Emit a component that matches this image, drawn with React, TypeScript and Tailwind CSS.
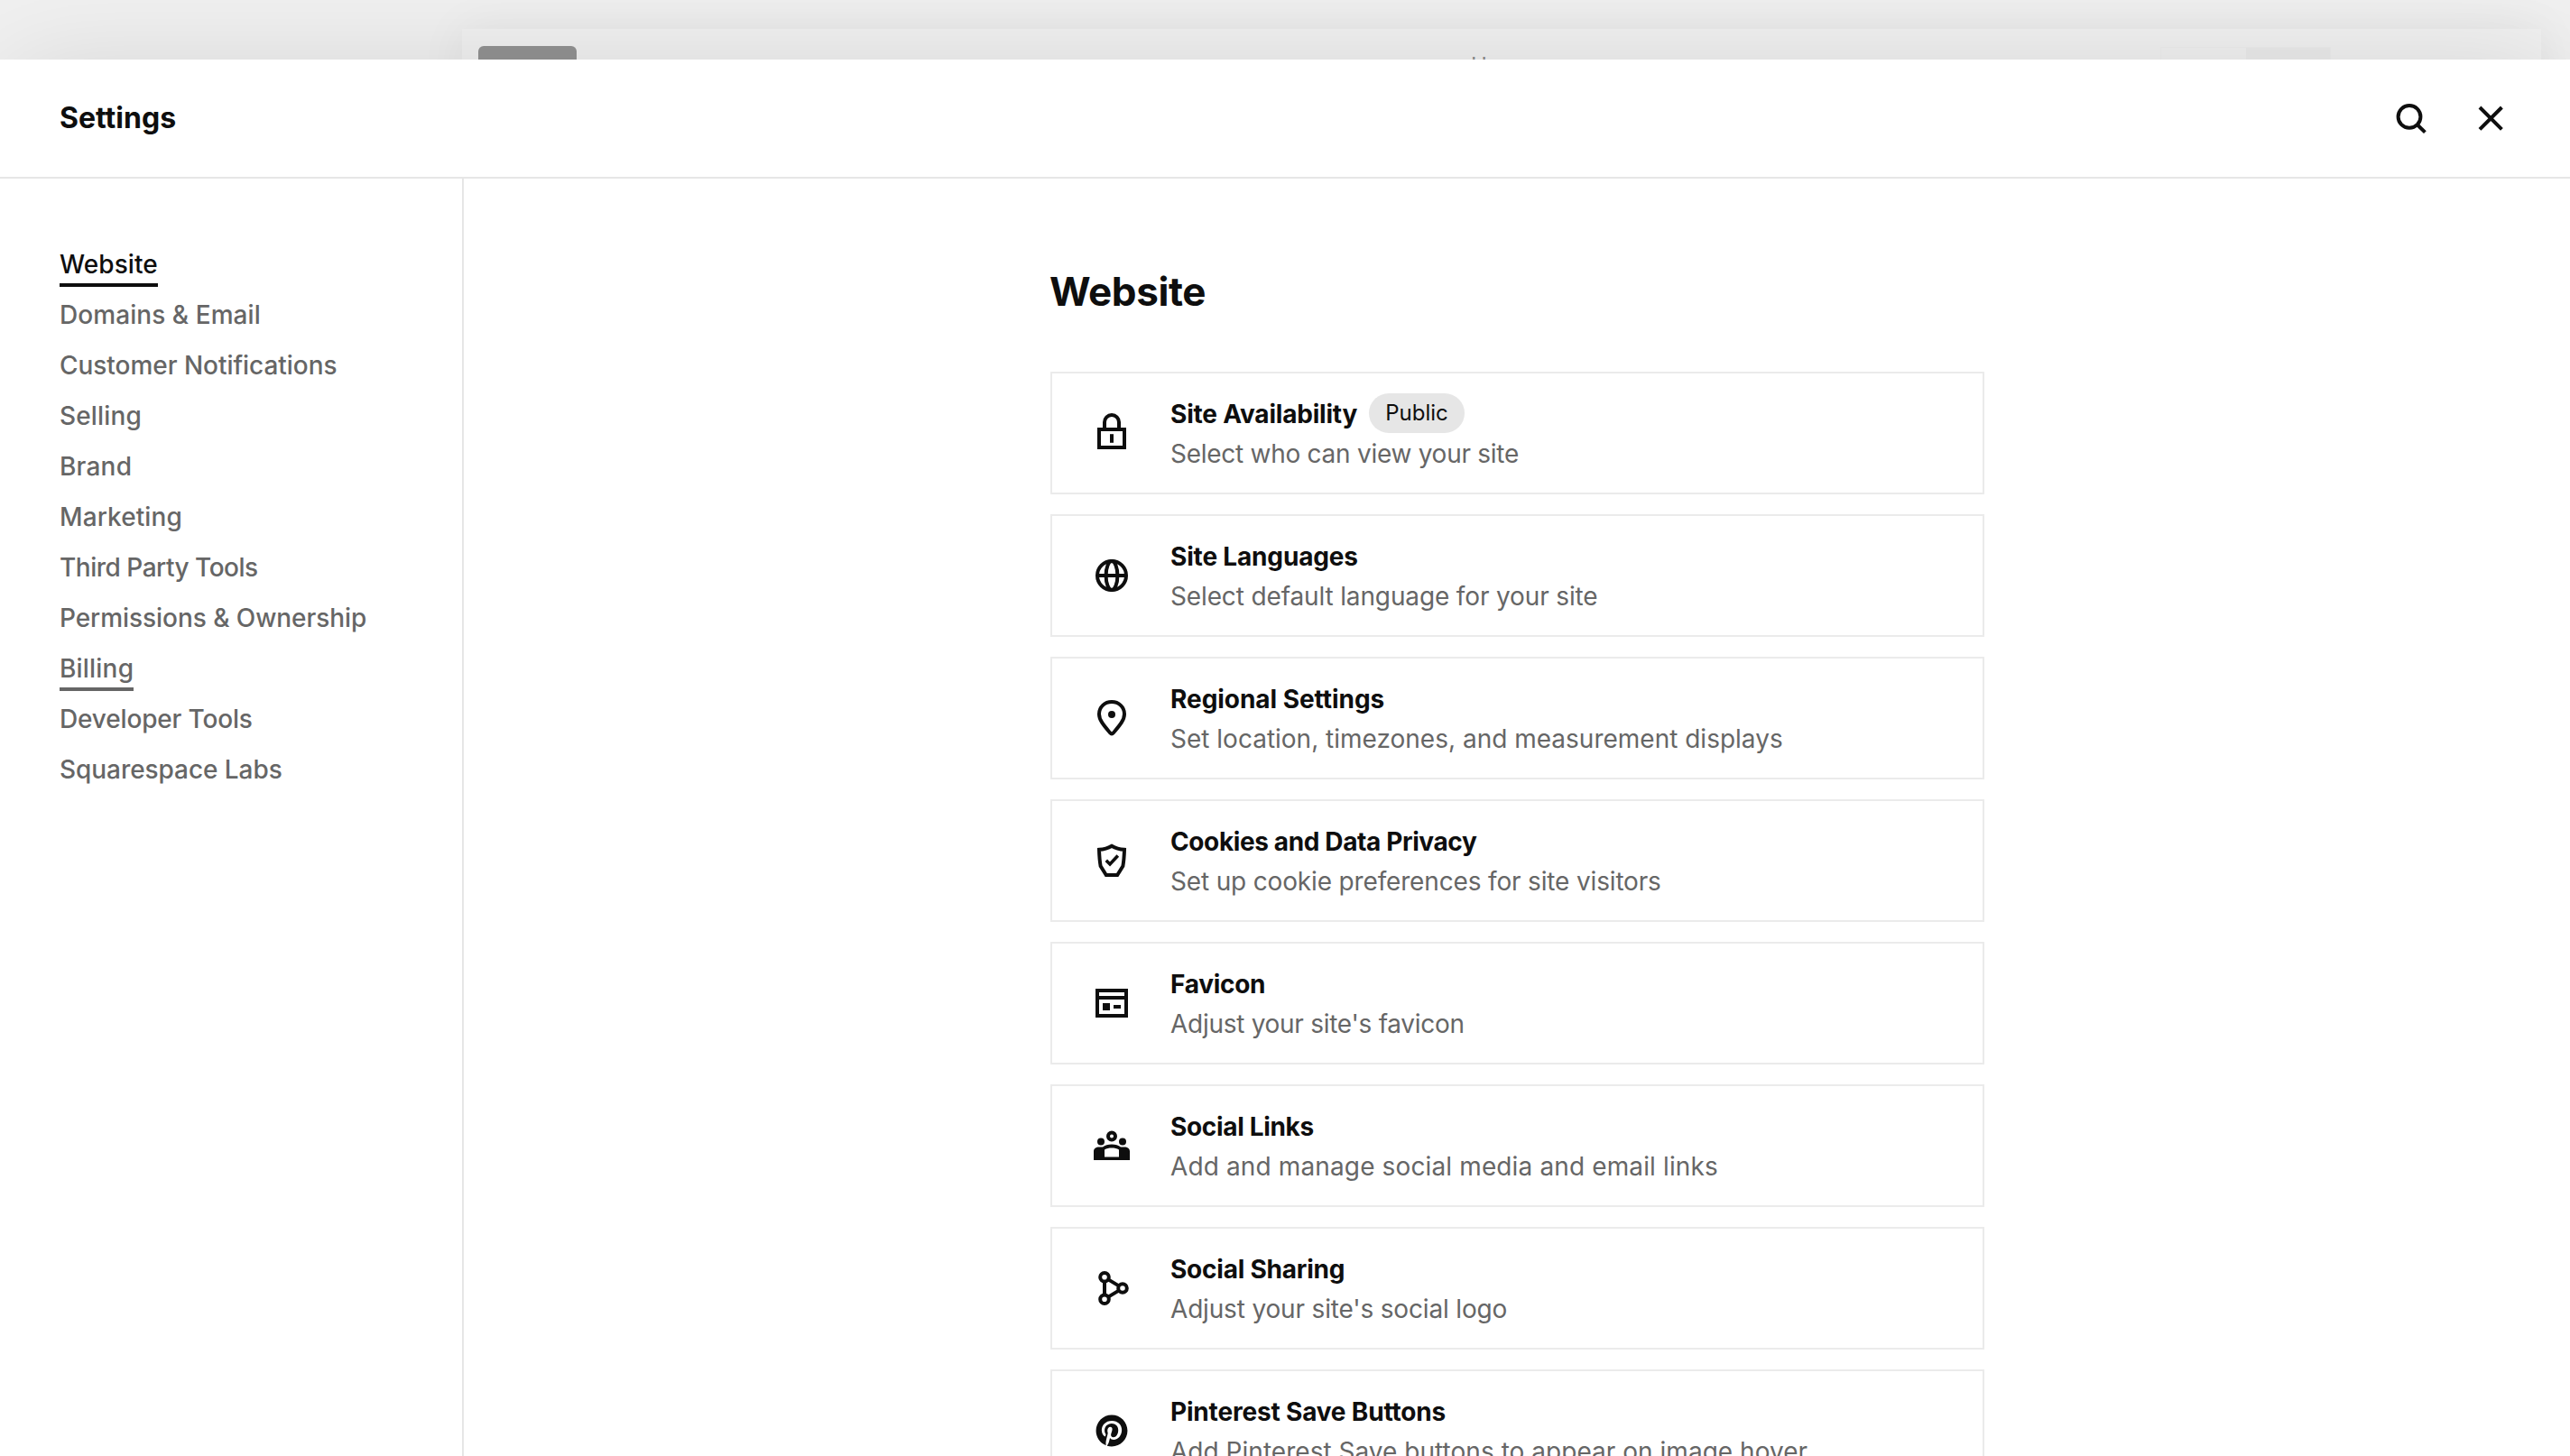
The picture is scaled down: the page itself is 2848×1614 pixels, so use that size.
import React, { useState } from 'react';
import { FaPinterest } from 'react-icons/fa';

interface NavItem {
  label: string;
  tracking: string;
}

interface SettingItem {
  title: string;
  titleTracking: string;
  description: string;
  descTracking: string;
  Icon: React.FC;
  badge?: string;
}

const Glyph: React.FC<{ children: React.ReactNode }> = ({ children }) => (
  <svg viewBox="0 0 24 24" className="w-12 h-12 shrink-0" fill="none" stroke="currentColor" strokeWidth={2}>
    {children}
  </svg>
);

const LockIcon = () => (
  <Glyph>
    <path d="M5 10H19V20H5Z" />
    <path d="M8 10V6a4 4 0 0 1 8 0V10" />
    <path d="M12 12.6V17.4" />
  </Glyph>
);

const GlobeIcon = () => (
  <Glyph>
    <circle cx="12" cy="12" r="8" />
    <ellipse cx="12" cy="12" rx="3.2" ry="8" />
    <path d="M4 12H20" />
  </Glyph>
);

const PinIcon = () => (
  <Glyph>
    <path d="M12 20.8C11.7 20.8 11.4 20.6 11.1 20.2C8 16.5 5 13.3 5 9.7C5 5.9 8.1 3 12 3C15.9 3 19 5.9 19 9.7C19 13.3 16 16.5 12.9 20.2C12.6 20.6 12.3 20.8 12 20.8Z" />
    <circle cx="12" cy="10" r="2" fill="currentColor" stroke="none" />
  </Glyph>
);

const ShieldIcon = () => (
  <Glyph>
    <path d="M12 3.9C10 5.1 7.6 5.8 5 5.9C5.1 9.2 5.3 12.2 5.8 15L8.9 20H15.1L18.2 15C18.7 12.2 18.9 9.2 19 5.9C16.4 5.8 14 5.1 12 3.9Z" />
    <path d="M8.9 11.9L11 14L15.4 9.3" strokeWidth={1.8} />
  </Glyph>
);

const FaviconIcon = () => (
  <Glyph>
    <path d="M4 5H20V19H4Z" />
    <path d="M4 9H20" />
    <path d="M7 12H11V16H7Z" fill="currentColor" stroke="none" />
    <path d="M13 14H17" />
  </Glyph>
);

const PeopleIcon = () => (
  <Glyph>
    <circle cx="12" cy="6.8" r="2" />
    <circle cx="6" cy="9.8" r="2" fill="currentColor" stroke="none" />
    <circle cx="18" cy="9.8" r="2" fill="currentColor" stroke="none" />
    <path
      d="M2 20V15.2C2 13.8 3.2 12.8 5 12.8H7C8.2 11.9 10 11.3 12 11.3C14 11.3 15.8 11.9 17 12.8H19C20.8 12.8 22 13.8 22 15.2V20ZM8 18.2H16V14.2C14.9 13.6 13.5 13.3 12 13.3C10.5 13.3 9.1 13.6 8 14.2Z"
      fill="currentColor"
      fillRule="evenodd"
      stroke="none"
    />
  </Glyph>
);

const ShareIcon = () => (
  <Glyph>
    <circle cx="8" cy="5.9" r="2.4" />
    <circle cx="8" cy="18.1" r="2.4" />
    <circle cx="18" cy="12" r="2.4" />
    <path d="M8 8.3V15.7M10.1 7.2L15.9 10.7M10.1 16.8L15.9 13.3" />
  </Glyph>
);

const PinterestIcon = () => (
  <div className="w-12 h-12 shrink-0 flex items-center justify-center">
    <FaPinterest size={36} />
  </div>
);

const navItems: NavItem[] = [
  { label: 'Website', tracking: 'tracking-[0.07px]' },
  { label: 'Domains & Email', tracking: 'tracking-[0.06px]' },
  { label: 'Customer Notifications', tracking: 'tracking-[-0.04px]' },
  { label: 'Selling', tracking: 'tracking-[0.16px]' },
  { label: 'Brand', tracking: 'tracking-[0.2px]' },
  { label: 'Marketing', tracking: 'tracking-[0.1px]' },
  { label: 'Third Party Tools', tracking: 'tracking-[-0.49px]' },
  { label: 'Permissions & Ownership', tracking: 'tracking-[-0.06px]' },
  { label: 'Billing', tracking: 'tracking-[0.2px]' },
  { label: 'Developer Tools', tracking: 'tracking-[-0.16px]' },
  { label: 'Squarespace Labs', tracking: 'tracking-[-0.06px]' },
];

const settings: SettingItem[] = [
  { title: 'Site Availability', titleTracking: 'tracking-[-0.2px]', description: 'Select who can view your site', descTracking: 'tracking-[-0.27px]', Icon: LockIcon, badge: 'Public' },
  { title: 'Site Languages', titleTracking: 'tracking-[-0.17px]', description: 'Select default language for your site', descTracking: 'tracking-[-0.14px]', Icon: GlobeIcon },
  { title: 'Regional Settings', titleTracking: 'tracking-[-0.05px]', description: 'Set location, timezones, and measurement displays', descTracking: 'tracking-[0px]', Icon: PinIcon },
  { title: 'Cookies and Data Privacy', titleTracking: 'tracking-[-0.38px]', description: 'Set up cookie preferences for site visitors', descTracking: 'tracking-[-0.16px]', Icon: ShieldIcon },
  { title: 'Favicon', titleTracking: 'tracking-[-0.28px]', description: "Adjust your site's favicon", descTracking: 'tracking-[-0.28px]', Icon: FaviconIcon },
  { title: 'Social Links', titleTracking: 'tracking-[-0.33px]', description: 'Add and manage social media and email links', descTracking: 'tracking-[0.13px]', Icon: PeopleIcon },
  { title: 'Social Sharing', titleTracking: 'tracking-[-0.23px]', description: "Adjust your site's social logo", descTracking: 'tracking-[-0.17px]', Icon: ShareIcon },
  { title: 'Pinterest Save Buttons', titleTracking: 'tracking-[-0.18px]', description: 'Add Pinterest Save buttons to appear on image hover', descTracking: 'tracking-[0.03px]', Icon: PinterestIcon },
];

const Backdrop: React.FC = () => (
  <div className="h-[66px] shrink-0 overflow-hidden bg-[#f0f0f0] pt-8 pl-[512px] pr-8">
    <div className="h-40 bg-[#f0f0f0] flex items-start shadow-[0_0_50px_rgba(0,0,0,0.06)]">
      <div className="ml-[18px] mt-[19px] w-[109px] h-10 rounded-md bg-[#929292]" />
      <span className="ml-[991px] mt-[29px] w-[66px] text-2xl leading-6 text-[#8c8c8c]">Home</span>
      <div className="ml-[698px] mt-5 h-10 w-[189px] flex border border-[#ededed]">
        <div className="flex-1" />
        <div className="flex-1 bg-[#eaeaea]" />
      </div>
    </div>
  </div>
);

const Header: React.FC = () => (
  <header className="h-[132px] shrink-0 flex items-center justify-between pl-[66px] pr-16 border-b-2 border-[#e6e6e6]">
    <h1 className="text-[32px] font-bold">Settings</h1>
    <div className="flex items-center gap-10">
      <button aria-label="Search">
        <svg viewBox="0 0 48 48" className="w-12 h-12" fill="none" stroke="currentColor" strokeWidth={4}>
          <circle cx="22" cy="22.4" r="12.4" />
          <path d="M30.5 31L39.4 39.6" />
        </svg>
      </button>
      <button aria-label="Close">
        <svg viewBox="0 0 48 48" className="w-12 h-12" fill="none" stroke="currentColor" strokeWidth={4}>
          <path d="M12 12L36.4 36.4M36.4 12L12 36.4" />
        </svg>
      </button>
    </div>
  </header>
);

const SettingCard: React.FC<{ item: SettingItem }> = ({ item }) => (
  <button className="h-[136px] w-full shrink-0 flex items-center pl-[42px] border-2 border-[#ebebeb] text-left">
    <item.Icon />
    <div className="ml-[41px] text-[28px] leading-[44px]">
      <div className="flex items-center">
        <span className={`font-bold whitespace-nowrap translate-y-px ${item.titleTracking}`}>{item.title}</span>
        {item.badge && (
          <span className="ml-[13px] h-11 px-[18px] rounded-full bg-[#e6e6e6] text-2xl leading-[44px]">{item.badge}</span>
        )}
      </div>
      <p className={`text-[#666666] whitespace-nowrap translate-y-px ${item.descTracking}`}>{item.description}</p>
    </div>
  </button>
);

const App: React.FC = () => {
  const [active, setActive] = useState('Website');
  const highlighted = 'Billing';

  const itemStyle = (label: string) => {
    if (label === active) return 'text-[#0e0e0e] border-[#0e0e0e]';
    if (label === highlighted) return 'text-[#666666] border-[#666666]';
    return 'text-[#666666] border-transparent';
  };

  return (
    <div className="h-screen w-full flex flex-col overflow-hidden bg-white text-[#0e0e0e] font-['Inter',sans-serif]">
      <Backdrop />
      <div className="relative flex-1 min-h-0 flex flex-col bg-white shadow-[0_0_110px_-12px_rgba(0,0,0,0.12)]">
        <Header />
        <div className="flex-1 min-h-0 flex">
          <nav className="w-[514px] shrink-0 border-r-2 border-[#e6e6e6] pt-[66px] pl-[66px] flex flex-col items-start">
            {navItems.map((item) => (
              <button
                key={item.label}
                onClick={() => setActive(item.label)}
                className={`h-[54px] mb-0.5 pt-2 border-b-4 text-[28px] leading-[42px] font-medium whitespace-nowrap ${item.tracking} ${itemStyle(item.label)}`}
              >
                {item.label}
              </button>
            ))}
          </nav>
          <main className="flex-1 min-w-0 overflow-hidden pt-[97px] pl-px flex flex-col items-center">
            <div className="w-[1035px]">
              <h2 className="-ml-px text-[44px] leading-[56px] font-bold tracking-[-0.4px] mb-[61px]">Website</h2>
              <div className="flex flex-col gap-[22px]">
                {settings.map((item) => (
                  <SettingCard key={item.title} item={item} />
                ))}
              </div>
            </div>
          </main>
        </div>
      </div>
    </div>
  );
};

export default App;
